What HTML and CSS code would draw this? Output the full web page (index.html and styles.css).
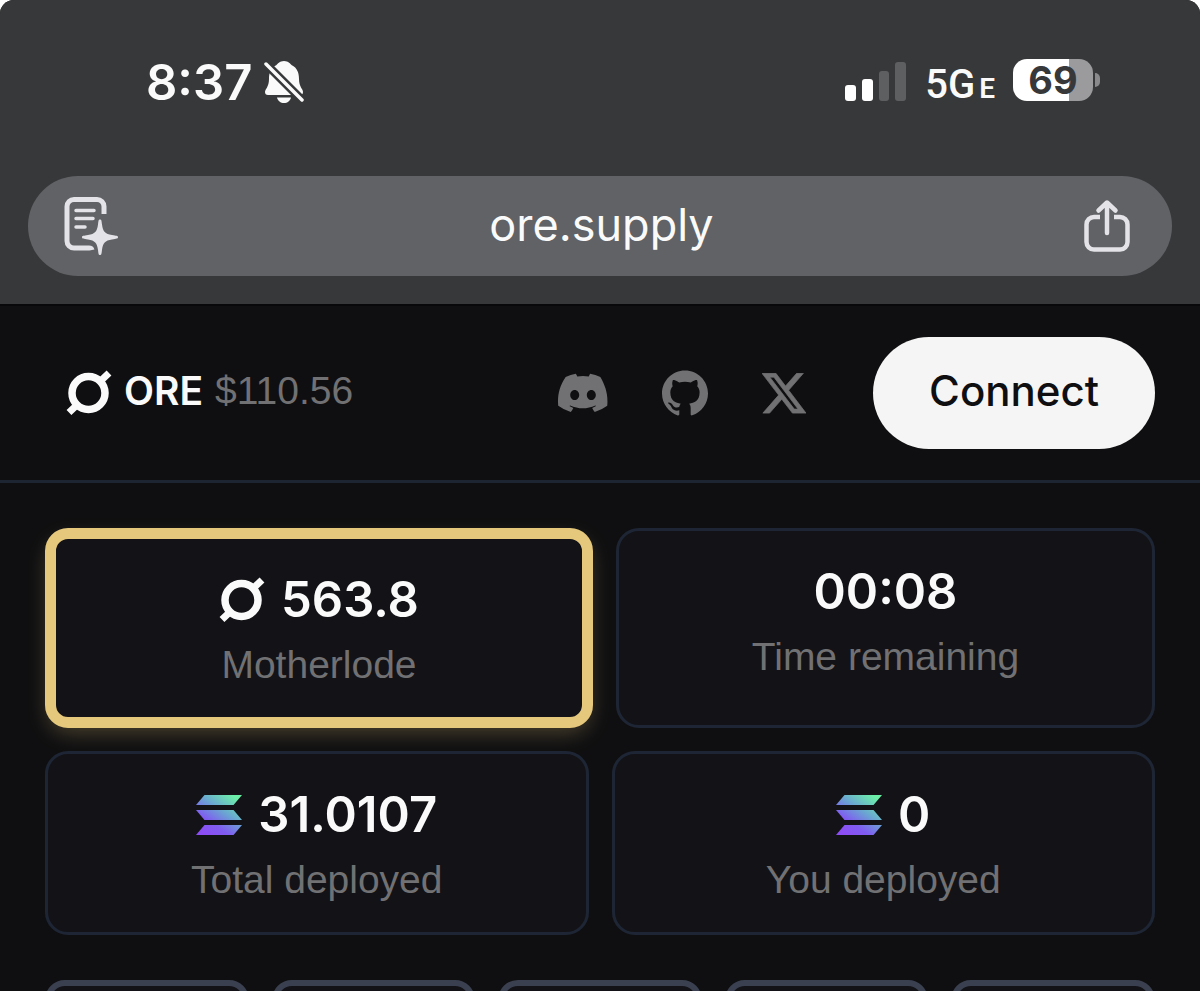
FILE: index.html
```html
<!DOCTYPE html>
<html lang="en">
  <head>
    <meta charset="UTF-8" />
    <meta name="viewport" content="width=device-width, initial-scale=1.0" />
    <title>ORE</title>
    <link rel="stylesheet" href="styles.css">
  </head>
  <body>
    <svg class="defs" width="0" height="0" aria-hidden="true">
      <defs>
        <linearGradient id="sol-gradient" gradientUnits="userSpaceOnUse" x1="8" y1="42" x2="38" y2="-2">
          <stop offset="0.05" stop-color="#8d4df5" />
          <stop offset="0.3" stop-color="#7f5cf0" />
          <stop offset="0.6" stop-color="#6aa6d2" />
          <stop offset="0.95" stop-color="#6cf0a8" />
        </linearGradient>
        <symbol id="ore" viewBox="0 0 46 46">
          <circle cx="22.5" cy="23" r="16.5" fill="none" stroke="currentColor" stroke-width="7.5" />
          <path d="M33 12.500L43 3M3 42.500L13 33" fill="none" stroke="currentColor" stroke-width="7" />
        </symbol>
        <symbol id="sol" viewBox="0 0 46 40">
          <path d="M8.500 0H46L37.500 10H0ZM0 15H37.500L46 25H8.500ZM8.500 30H46L37.500 40H0Z" fill="url(#sol-gradient)" />
        </symbol>
      </defs>
    </svg>

    <div class="browser">
      <div class="status">
        <div class="status-left">
          <span class="time">8:37</span>
          <svg class="bell" viewBox="0 0 40 44">
            <path d="M20 1c-4.500 0-6.500 3-7.500 4-6 3-7.500 8-7.500 14 0 8-4 10-4 13 0 2 1 3 3 3h32c2 0 3-1 3-3 0-3-4-5-4-13 0-6-1.500-11-7.500-14-1-1-3-4-7.500-4z" fill="currentColor" />
            <path d="M13 37.500h14c-.8 3.500-3.500 5.500-7 5.500s-6.200-2-7-5.500z" fill="currentColor" />
            <path d="M3 5L38 40" stroke="#373839" stroke-width="8.500" />
            <path d="M2 4L38 40" stroke="currentColor" stroke-width="3.500" stroke-linecap="round" />
          </svg>
        </div>
        <div class="status-right">
          <svg class="signal" viewBox="0 0 62 40">
            <rect x="0" y="23" width="11" height="16" rx="3" fill="#fff" />
            <rect x="17" y="17" width="11" height="22" rx="3" fill="#fff" />
            <rect x="34" y="9" width="10" height="30" rx="3" fill="#5e5f61" />
            <rect x="50" y="0" width="11" height="39" rx="3" fill="#5e5f61" />
          </svg>
          <span class="network">5G<span class="network-small">E</span></span>
          <div class="battery"><span>69</span></div>
        </div>
      </div>
      <div class="address">
        <button class="icon-button" aria-label="Reader">
          <svg class="reader" viewBox="0 0 56 60">
            <path d="M41 18V10.500a7 7 0 0 0-7-7H11a7 7 0 0 0-7 7V45a7 7 0 0 0 7 7H26Q28.500 52 29 54" fill="none" stroke="currentColor" stroke-width="5" />
            <path d="M13 14.500H31M13 22.500H30M13 31H22" stroke="currentColor" stroke-width="3.500" stroke-linecap="round" />
            <path d="M37 23.500c1.500 0 1.500 1 2 5 1 7 3 9.500 10 10.500 4.500.7 6 .8 6 2.200s-1.500 1.500-6 2.200c-7 1-9 3.500-10 10.500-.5 4-.5 5-2 5s-1.500-1-2-5c-1-7-3-9.500-10-10.500-4.500-.7-6-.8-6-2.200s1.500-1.500 6-2.200c7-1 9-3.500 10-10.500.5-4 .5-5 2-5z" fill="currentColor" />
          </svg>
        </button>
        <span class="url">ore.supply</span>
        <button class="icon-button" aria-label="Share">
          <svg class="share" viewBox="0 0 46 54">
            <path d="M16 18H10a7.500 7.500 0 0 0-7.500 7.500V43A7.500 7.500 0 0 0 10 50.500H36A7.500 7.500 0 0 0 43.500 43V25.500A7.500 7.500 0 0 0 36 18H30" fill="none" stroke="currentColor" stroke-width="4.500" />
            <path d="M23 34V4M14.500 11.500L23 3.500L31.500 11.500" fill="none" stroke="currentColor" stroke-width="4.500" stroke-linecap="round" stroke-linejoin="round" />
          </svg>
        </button>
      </div>
    </div>

    <header class="header">
      <a class="brand" href="#">
        <svg class="ore-icon"><use href="#ore" /></svg>
        <span class="brand-name">ORE</span>
        <span class="brand-price">$110.56</span>
      </a>
      <nav class="links">
        <a href="#" aria-label="Discord">
          <svg class="discord" viewBox="0 0 24 18.500">
            <path d="M20.317 1.560A19.790 19.790 0 0 0 15.432.050a.07.07 0 0 0-.079.037c-.21.375-.444.864-.608 1.250a18.270 18.270 0 0 0-5.487 0A12.640 12.640 0 0 0 8.641.087.077.077 0 0 0 8.562.050 19.736 19.736 0 0 0 3.677 1.560C.533 6.247-.32 10.818.099 15.332c.002.022.014.043.031.057a19.900 19.900 0 0 0 5.993 3.030c.462-.63.874-1.295 1.226-1.994a13.107 13.107 0 0 1-1.872-.892l.372-.292c3.928 1.793 8.180 1.793 12.062 0l.373.292a12.299 12.299 0 0 1-1.873.892c.36.698.772 1.362 1.225 1.993a19.839 19.839 0 0 0 6.002-3.029c.5-5.177-.838-9.674-3.321-13.829zM8.020 12.600c-1.183 0-2.157-1.085-2.157-2.419s.956-2.419 2.157-2.419 2.176 1.095 2.157 2.419c0 1.334-.956 2.419-2.157 2.419zm7.975 0c-1.183 0-2.157-1.085-2.157-2.419s.955-2.419 2.157-2.419 2.176 1.095 2.157 2.419c0 1.334-.946 2.419-2.157 2.419z" fill="currentColor" />
          </svg>
        </a>
        <a href="#" aria-label="GitHub">
          <svg class="github" viewBox="0 0 24 24">
            <path d="M12 .297c-6.630 0-12 5.373-12 12 0 5.303 3.438 9.800 8.205 11.385.6.113.82-.258.82-.577v-2.040c-3.338.724-4.042-1.610-4.042-1.610C4.422 18.070 3.633 17.700 3.633 17.700c-1.087-.744.084-.729.084-.729 1.205.084 1.838 1.236 1.838 1.236 1.070 1.835 2.809 1.305 3.495.998.108-.776.417-1.305.760-1.605-2.665-.3-5.466-1.332-5.466-5.930 0-1.310.465-2.380 1.235-3.220-.135-.303-.54-1.523.105-3.176 0 0 1.005-.322 3.300 1.230.96-.267 1.980-.399 3-.405 1.020.006 2.040.138 3 .405 2.280-1.552 3.285-1.230 3.285-1.230.645 1.653.24 2.873.12 3.176.765.840 1.230 1.910 1.230 3.220 0 4.610-2.805 5.625-5.475 5.920.42.360.81 1.096.81 2.220v3.286c0 .315.210.690.825.570C20.565 22.092 24 17.592 24 12.297c0-6.627-5.373-12-12-12" fill="currentColor" />
          </svg>
        </a>
        <a href="#" aria-label="X">
          <svg class="x-logo" viewBox="0 0 24 22">
            <path d="M18.900 0H22.580L14.540 9.190 24 21.700H16.590L10.790 14.110 4.150 21.700H.470L9.070 11.870 0 0H7.590L12.830 6.930ZM17.610 19.500H19.650L6.480 2.090H4.300Z" fill="currentColor" stroke="currentColor" stroke-width="0.4" />
          </svg>
        </a>
      </nav>
      <button class="connect">Connect</button>
    </header>

    <main class="content">
      <section class="stats stats-top">
        <div class="card card-gold">
          <div class="value"><svg class="ore-icon"><use href="#ore" /></svg>563.8</div>
          <div class="label">Motherlode</div>
        </div>
        <div class="card">
          <div class="value">00:08</div>
          <div class="label">Time remaining</div>
        </div>
      </section>
      <section class="stats">
        <div class="card">
          <div class="value"><svg class="sol-icon"><use href="#sol" /></svg>31.0107</div>
          <div class="label">Total deployed</div>
        </div>
        <div class="card">
          <div class="value"><svg class="sol-icon"><use href="#sol" /></svg>0</div>
          <div class="label">You deployed</div>
        </div>
      </section>
      <section class="tiles">
        <div class="tile"></div>
        <div class="tile"></div>
        <div class="tile"></div>
        <div class="tile"></div>
        <div class="tile"></div>
      </section>
    </main>
  </body>
</html>
```

FILE: styles.css
```css
* {
  box-sizing: border-box;
}
html {
  background-color: #ffffff;
}
body {
  margin: 0;
  height: 100vh;
  overflow: hidden;
  border-radius: 14px 14px 0 0;
  background-color: #0f0f11;
  color: #fafafa;
  font-family: Inter, "Liberation Sans", sans-serif;
}
svg {
  display: block;
  flex-shrink: 0;
}
button {
  border: none;
  font-family: inherit;
}
a {
  color: inherit;
  text-decoration: none;
}
.defs {
  position: absolute;
}

/* browser chrome */
.browser {
  padding: 0 28px 28px;
  background-color: #373839;
  border-bottom: 2px solid #08080a;
}
.status {
  display: flex;
  justify-content: space-between;
  height: 176px;
  padding: 52px 79px 64px 118px;
}
.status-left,
.status-right {
  display: flex;
  align-items: center;
}
.status-left {
  gap: 12px;
}
.time {
  padding-top: 2px;
  font-size: 49px;
  font-weight: 600;
  line-height: 60px;
}
.bell {
  width: 40px;
  height: 44px;
}
.signal {
  width: 62px;
  height: 40px;
}
.network {
  margin: 0 18px;
  padding-top: 4px;
  font-family: Roboto, sans-serif;
  font-size: 40px;
  font-weight: 500;
}
.network-small {
  margin-left: 4px;
  font-size: 28px;
  font-weight: 600;
}
.battery {
  position: relative;
  display: flex;
  align-items: center;
  justify-content: center;
  width: 80px;
  height: 42px;
  margin-bottom: 4px;
  border-radius: 14px;
  background: linear-gradient(to right, #ffffff 70%, #9b9b9e 70%);
  color: #373839;
  font-size: 38px;
  font-weight: 700;
}
.battery::after {
  content: "";
  position: absolute;
  top: 14px;
  right: -7px;
  width: 5px;
  height: 14px;
  border-radius: 0 5px 5px 0;
  background-color: #8a8a8c;
}
.address {
  display: flex;
  align-items: center;
  justify-content: space-between;
  height: 100px;
  padding: 0 42px 0 35px;
  border-radius: 50px;
  background-color: #606266;
}
.icon-button {
  padding: 0;
  background: none;
  color: #e3e3e8;
}
.reader {
  width: 56px;
  height: 60px;
}
.share {
  width: 46px;
  height: 54px;
}
.url {
  padding-bottom: 3px;
  font-size: 45px;
  line-height: 60px;
}

/* site header */
.header {
  display: flex;
  align-items: center;
  height: 177px;
  padding: 0 45px 0 66px;
  border-bottom: 3px solid #1e2532;
}
.brand {
  display: flex;
  align-items: center;
  gap: 12px;
  margin-right: auto;
}
.ore-icon {
  width: 46px;
  height: 46px;
}
.brand-name,
.brand-price {
  padding-bottom: 5px;
}
.brand-name {
  font-size: 39px;
  font-weight: 600;
}
.brand-price {
  color: #717173;
  font-family: "Liberation Sans", sans-serif;
  font-size: 39px;
}
.links {
  display: flex;
  align-items: center;
  gap: 54px;
  margin-right: 67px;
  color: #717173;
}
.discord {
  width: 50px;
  height: 40px;
}
.github {
  width: 46px;
  height: 46px;
}
.x-logo {
  width: 44px;
  height: 41px;
}
.connect {
  height: 112px;
  padding: 0 56px 5px;
  border-radius: 56px;
  background-color: #f5f5f5;
  color: #0f0f11;
  font-size: 42px;
  font-weight: 500;
}

/* round stats */
.content {
  display: flex;
  flex-direction: column;
  gap: 23px;
  padding: 45px;
}
.stats {
  display: grid;
  grid-template-columns: 1fr 1fr;
  gap: 23px;
}
.stats-top {
  grid-template-columns: 548fr 539fr;
}
.card {
  padding: 28px 20px 20px;
  border: 3px solid #1e2635;
  border-radius: 23px;
  background-color: #131317;
  text-align: center;
}
.card-gold {
  border: 11px solid #e5c87b;
  box-shadow: 0 8px 22px -4px rgba(227, 197, 120, 0.3);
}
.value {
  display: flex;
  align-items: center;
  justify-content: center;
  gap: 16px;
  font-size: 49px;
  font-weight: 600;
  line-height: 66px;
}
.label {
  color: #717173;
  font-family: "Liberation Sans", sans-serif;
  font-size: 39px;
  line-height: 64px;
}
.sol-icon {
  width: 46px;
  height: 40px;
}
.tiles {
  display: grid;
  grid-template-columns: repeat(5, 1fr);
  gap: 23px;
  margin-top: 22px;
}
.tile {
  aspect-ratio: 1;
  border: 6px solid #3a4050;
  border-radius: 20px;
  background-color: #131317;
}
```
